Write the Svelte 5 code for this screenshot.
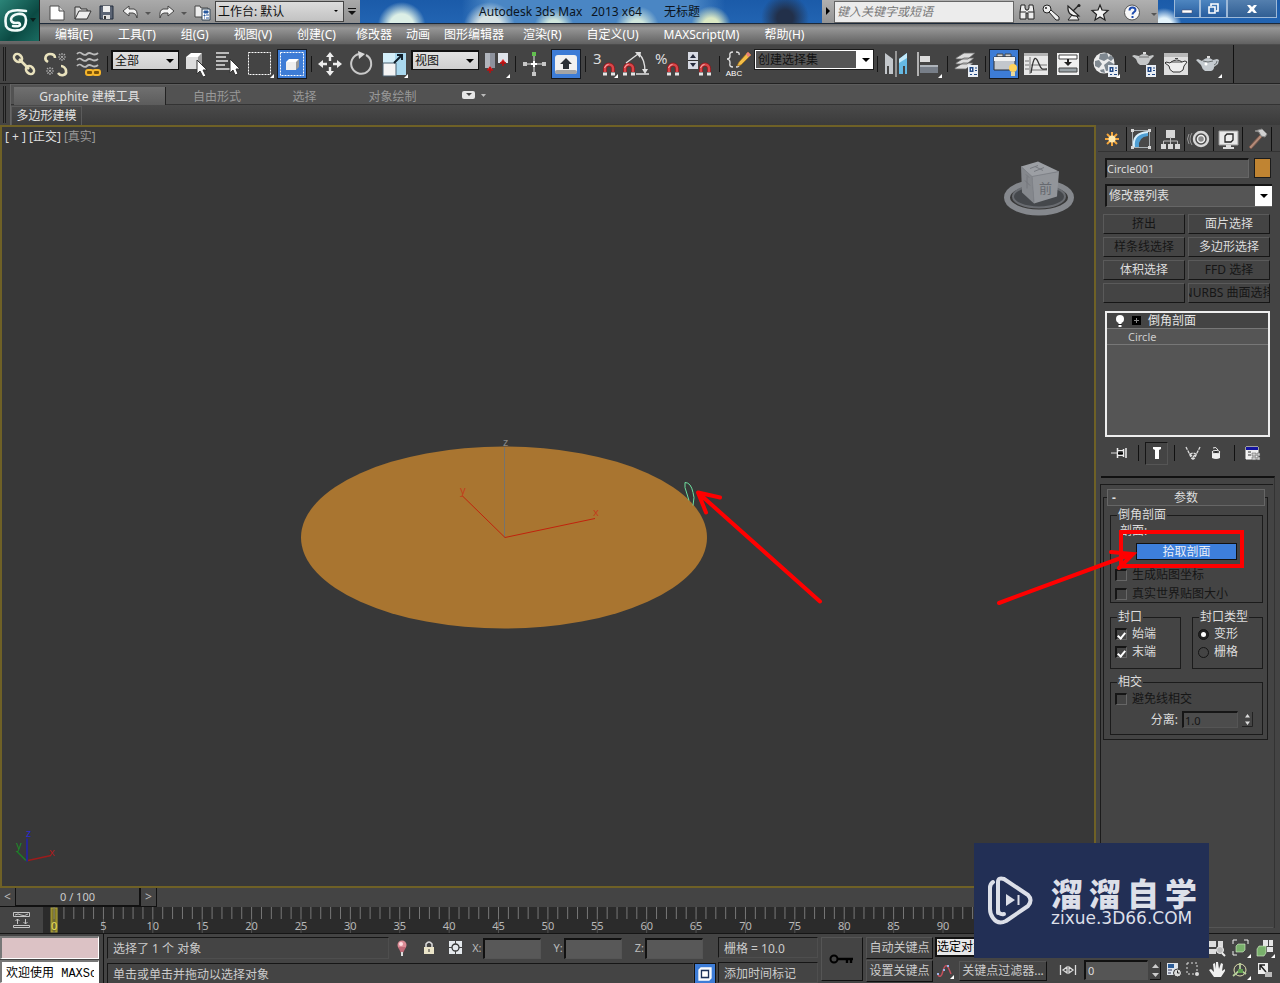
<script>
  const menus = [
    ['编辑(E)', 0], ['工具(T)', 0], ['组(G)', 0], ['视图(V)', 0], ['创建(C)', 0],
    ['修改器', 1], ['动画', 1], ['图形编辑器', 1],
    ['渲染(R)', 0], ['自定义(U)', 0], ['MAXScript(M)', 0], ['帮助(H)', 0]
  ];

  const fly = '<path d="M28 24v4h-4z" fill="#fff"/>';
  const magnet = '<path d="M14 22v-3.500a4 4 0 0 1 8 0V22" fill="none" stroke="#8f1a1e" stroke-width="4"/><path d="M14 22v-3.500a4 4 0 0 1 8 0V22" fill="none" stroke="#d9474a" stroke-width="2.400"/><path d="M13.500 18q1-3.500 4-3.500" fill="none" stroke="#f7b0b0"/><path d="M12 22.500h4v3h-4zM20 22.500h4v3h-4z" fill="#e4e4e4"/>';
  const sheet = '<path d="M16 15h10v12H16z" fill="#e9eef4"/><path d="M17.500 17h4v5h-4z" fill="#234a86"/><path d="M19 18.500h1v2h-1z" fill="#fff"/><path d="M23 18h2M23 20.500h2M18 24.500h2M22 24.500h3" stroke="#234a86"/>';

  const tools = {
    link: '<g fill="none" stroke="#e9e2bd" stroke-width="2.600"><ellipse cx="8" cy="8" rx="4.500" ry="3.500" transform="rotate(45 8 8)"/><ellipse cx="20" cy="20" rx="4.500" ry="3.500" transform="rotate(45 20 20)"/><path d="M9 9l10 10"/></g>',
    unlink: '<g fill="none" stroke="#e9e2bd" stroke-width="2.600"><path d="M6 12c-5-3-2-8 2-8s5 2 5 4M16 23c3 4 9 2 8-2 0-3-3-5-5-5"/></g><g stroke="#aaa" stroke-width="1.200"><path d="M20 3v8M16 7h8M17 4l6 6M23 4l-6 6M8 17v8M4 21h8M5 18l6 6M11 18l-6 6" stroke-dasharray="2 1"/></g>',
    bind: '<g fill="none" stroke="#bcbcbc" stroke-width="1.800"><path d="M3 4c4-5 6 4 10 0s6 4 11-1M3 10c4-5 6 4 10 0s6 4 11-1M3 16c4-5 6 4 10 0s6 4 11-1"/></g><g fill="#7a5208" stroke="#f6b52a" stroke-width="2"><rect x="12" y="20" width="7" height="5" rx="2"/><rect x="19" y="20" width="7" height="5" rx="2"/></g>',
    select: '<path d="M4 7l5-4h11l-3 4z" fill="#fff"/><path d="M4 7h12v12H4z" fill="#dedede"/><path d="M16 7l4-4v12l-4 4z" fill="#9b9b9b"/><path d="M15 10v14l3-3 3 6 3-1-3-6h4z" fill="#fff" stroke="#333"/>',
    list: '<path d="M2 3h13M2 7h10M2 11h12M2 15h9M2 19h14" stroke="#e2e2e2" stroke-width="1.400"/><path d="M16 9v14l3-3 2 5 3-1-2-5h4z" fill="#fff" stroke="#333"/>',
    region: '<path d="M2.500 2.500h22v22h-22z" fill="none" stroke="#fff" stroke-dasharray="2 1"/>' + fly,
    crossing: '<path d="M2.500 2.500h23v23h-23z" fill="none" stroke="#fff" stroke-dasharray="2 1"/><path d="M8 12l3-3h10l-2 3z" fill="#fff"/><path d="M8 12h10v8H8z" fill="#eee"/><path d="M18 12l3-3v8l-3 3z" fill="#999"/>',
    move: '<path d="M14 2l4 5h-8zM14 26l4-5h-8zM2 14l5-4v8zM26 14l-5-4v8z" fill="#eee"/><path d="M14 7v4M14 17v4M7 14h4M17 14h4" stroke="#eee" stroke-width="2.400"/>',
    rotate: '<path d="M18 5a10 10 0 1 1-7-1" fill="none" stroke="#c9c9c9" stroke-width="2"/><path d="M10 1l7 3-6 5z" fill="#d9d9d9"/>',
    scale: '<path d="M3 3h23v22H3z" fill="#a9d8ee"/><path d="M3 3h12v12H3z" fill="#d4effa"/><path d="M3 13h13v13H3z" fill="#f4f4f4" stroke="#4a6070"/><path d="M14 13l7-7M17 5h5v5" fill="none" stroke="#10202c" stroke-width="2"/>' + fly,
    pivot: '<path d="M3 3h10v15H3z" fill="#8d929d"/><path d="M3 3h5v15H3z" fill="#b1b5bd"/><path d="M16 3h10v10H16z" fill="#dfe3ea"/><path d="M5 20h6l-3-4zM18 13h6l-3-4z" fill="#e03030"/><path d="M8 17v6M21 11v5M5 20h6M18 13h6" stroke="#b80f0f" stroke-width="1.500"/>' + fly,
    manipulate: '<path d="M14 5v18M5 14h18" stroke="#e5e5e5"/><path d="M11 14h6M14 11v6" stroke="#fff" stroke-width="2"/><path d="M12 2h4v4h-4z" fill="#62c04f"/><path d="M3 12h4v4H3zM22 12h4v4h-4zM12 22h4v4h-4z" fill="#c8c8c8"/>',
    keymode: '<rect x="3" y="5" width="22" height="19" rx="3" fill="#f1f1f1"/><rect x="3" y="20" width="22" height="4" rx="2" fill="#a4a4a4"/><path d="M14 8l6 6h-3v5h-6v-5H8z" fill="#2c3036"/>',
    snap: '<text x="3" y="14" font-family="Noto Sans" font-size="15" fill="#ddd">3</text><g transform="translate(1 0)">' + magnet + '</g>' + fly,
    angle: '<g transform="translate(-11 0)">' + magnet + '</g><path d="M4 13L16 4M14 24h13M17 4q6 5 6 18" fill="none" stroke="#e0e0e0" stroke-width="1.300"/><path d="M13 2h6l-1 6zM20 19h6l-3 5z" fill="#e0e0e0"/>',
    percent: '<text x="1" y="14" font-family="Noto Sans" font-size="15" fill="#ddd">%</text><g transform="translate(1 0)">' + magnet + '</g>',
    spinner: '<path d="M2 2h10v17H2z" fill="#d8dbe4"/><path d="M2 10.500h10" stroke="#333"/><path d="M4 8l3-4 3 4zM4 13h6l-3 4z" fill="#252a3c"/><g transform="translate(1 0)">' + magnet + '</g>',
    named: '<path d="M9 2q-4 0-3 4 0 3-3 3 3 0 3 4-1 4 3 4M12 2q4 0 3 3M12 17q4 0 3-4" fill="none" stroke="#ddd" stroke-width="1.400"/><path d="M24 2l3 3-10 10-4 1 2-4z" fill="#f2be48" stroke="#9b6a15" stroke-width=".7"/><path d="M24 2l3 3-3 2-2-3z" fill="#e67e7b"/><text x="10" y="26" text-anchor="middle" font-family="Liberation Sans" font-size="8" fill="#fff">ABC</text>',
    mirror: '<path d="M3 3l8 6v15H7v-8H5v8H3z" fill="#c3c7cb"/><path d="M14 1v26" stroke="#e8e8e8"/><path d="M25 3l-8 6v15h4v-8h2v8h2z" fill="#65b9e3"/><path d="M25 3l-8 6v4l8-5z" fill="#c1e9fb"/>',
    align: '<path d="M4 2v24" stroke="#eee" stroke-width="1.300"/><path d="M6 6h10v6H6z" fill="#dcdcdc"/><path d="M6 15h18v8H6z" fill="#777e88"/><path d="M6 15h18v2H6z" fill="#aeb4bb"/>' + fly,
    layers: '<path d="M3 18l8-5h10l-7 6H3zM4 13l8-5h10l-7 6H4zM4 8l8-5h11l-7 6H4z" fill="#ddd" stroke="#656565" stroke-width=".8"/>' + sheet,
    ribbon: '<path d="M7 4h6v3H7zM15 4h6v3h-6z" fill="#d1d1d1" stroke="#444"/><path d="M4 7h21v13H4z" fill="#c3c7cd" stroke="#2b2f36"/><path d="M4 7h21v4H4z" fill="#f1f1f1"/><circle cx="23" cy="18" r="4" fill="#ffd35c"/><path d="M21 22h4v4h-4z" fill="#e8d9a0"/>',
    curve: '<path d="M2 3h24v22H2z" fill="#e8e8e8"/><path d="M2 3h24v3H2z" fill="#b5b5b5"/><path d="M8 7v17M3 11h4M3 15h4M3 19h4M9 15h16M9 20h16" stroke="#777"/><path d="M9 23c3-20 5-16 8-9s4 5 8 5" fill="none" stroke="#333" stroke-width="1.300"/>',
    schematic: '<path d="M3 3h22v22H3z" fill="#f0f0f0"/><path d="M5 5h18v4H5z" fill="#fff" stroke="#444"/><path d="M5 18h18v4H5z" fill="#9aa3a8" stroke="#444"/><path d="M14 9v4" stroke="#222" stroke-width="2"/><path d="M10 12h8l-4 4z" fill="#222"/>',
    material: '<circle cx="12" cy="13" r="10.500" fill="#ededed"/><path d="M8 4l7-1 2 5-5 3-5-2zM3 11l4-1 3 4-3 4-4-2zM12 15l5-4 5 3-2 6-6 1zM18 5l4 3-3 3-3-2zM8 20l4-1 1 4-4-1z" fill="#7f8890"/>' + sheet + fly,
    rset: '<path d="M9 6q5-4 10 0l4-1 1 1-4 4q-1 4-4 5h-6Q7 13 6 9L2 6l2-1z" fill="#c5c7c8"/><path d="M13 2h3v2h-3z" fill="#ddd"/><path d="M9 7h10" stroke="#707070"/>' + sheet,
    rframe: '<path d="M2 3h24v22H2z" fill="#dfdfdf"/><path d="M2 3h24v4H2z" fill="#b9b9b9"/><path d="M9 12q6-4 11 0l3-1 2 1-3 4q0 5-4 6h-7q-4-2-4-6l-4-3 1-1 4 1z" fill="#eee" stroke="#333"/><path d="M13 8.500h3M9 12h11" stroke="#444"/>',
    render: '<path d="M9 10q5-4 10 0l4-1 2 1-1 4-4 3q0 3-3 4h-6Q8 19 7 15l-5-5 2-1 4 2z" fill="#c5cbd0"/><path d="M13 6h3v2h-3z" fill="#ddd"/><path d="M9 11q5 2 10 0M20 15q3-1 3-4" fill="none" stroke="#6b7072"/><circle cx="12" cy="14" r="1.500" fill="#fff"/>' + fly
  };

  const bar = [
    ['link', '选择并链接'], ['unlink', '取消链接选择'], ['bind', '绑定到空间扭曲'], '|',
    { value: '全部', label: '选择过滤器', kind: 'light' },
    ['select', '选择对象'], ['list', '按名称选择'], ['region', '矩形选择区域'], ['crossing', '窗口/交叉', true], '|',
    ['move', '选择并移动'], ['rotate', '选择并旋转'], ['scale', '选择并均匀缩放'],
    { value: '视图', label: '参考坐标系', kind: 'light' },
    ['pivot', '使用轴点中心'], '|', ['manipulate', '选择并操纵'], ['keymode', '键盘快捷键覆盖切换', true], '|',
    ['snap', '捕捉开关'], ['angle', '角度捕捉切换'], ['percent', '百分比捕捉切换'], ['spinner', '微调器捕捉切换'], '|',
    ['named', '编辑命名选择集'],
    { value: '创建选择集', label: '命名选择集', kind: 'dark' }, '|',
    ['mirror', '镜像'], ['align', '对齐'], '|', ['layers', '层管理器'], '|',
    ['ribbon', '石墨建模工具', true], ['curve', '曲线编辑器'], ['schematic', '图解视图'], '|',
    ['material', '材质编辑器'], '|', ['rset', '渲染设置'], ['rframe', '渲染帧窗口'], ['render', '渲染产品']
  ];

  const quick = [
    ['新建', 26, '<path d="M3 4h9l5 5v9H3z" fill="#fff" stroke="#4a4a4a"/><path d="M12 4v5h5" fill="#ddd" stroke="#4a4a4a"/>'],
    ['打开', 24, '<path d="M3 17V5h5l1 2h6v3" fill="#ddd" stroke="#333"/><path d="M3 17l4-8h12l-4 8z" fill="#eee" stroke="#333"/>'],
    ['保存', 24, '<path d="M4 4h13v13H4z" fill="#5b6474" stroke="#222c3c"/><path d="M7 4h7v6H7z" fill="#eee"/><path d="M7 13h7v4H7z" fill="#ddd"/><path d="M8 14h2v3H8z" fill="#333"/>'],
    ['撤消', 24, '<path d="M3 9l6-5v3h5q4 1 3 9-1-5-4-5H9v3z" fill="#f3f3f3" stroke="#454545"/>'],
    ['撤消列表', 12, '<path d="M7 10h6l-3 3z" fill="#555"/>'],
    ['重做', 24, '<path d="M18 9l-6-5v3H7Q3 8 4 16q1-5 4-5h4v3z" fill="#f3f3f3" stroke="#454545"/>'],
    ['重做列表', 12, '<path d="M7 10h6l-3 3z" fill="#555"/>'],
    ['项目文件夹', 24, '<path d="M3 4h5l1 2h7v9H3z" fill="#eee" stroke="#444"/><path d="M10 7h8v11h-8z" fill="#fff" stroke="#345"/><path d="M12 9h4v2h-4zM12 13h1v1h-1zM14 13h3M12 16h1M14 16h3" fill="#27599e" stroke="#27599e"/>']
  ];

  const info = [
    ['搜索', 24, '<path d="M5 3h4v3l1 2h2l1-2V3h4l1 7v7h-6v-6h-2v6H4v-7z" fill="#eee" stroke="#222"/><path d="M4 10h6M12 10h6" stroke="#222"/>'],
    ['速博应用中心', 24, '<circle cx="7" cy="7" r="4" fill="#eee" stroke="#222"/><circle cx="6" cy="6" r="1" fill="#222"/><path d="M9 10l7 8h3v-3l-8-7z" fill="#eee" stroke="#222"/>'],
    ['通讯中心', 24, '<path d="M8 13l-4 5h11l-3-5z" fill="#eee" stroke="#222"/><path d="M4 4q-1 11 11 10z" fill="#eee" stroke="#222" stroke-width="1.200"/><path d="M9 9l6-6" stroke="#222" stroke-width="1.300"/><circle cx="15" cy="3.500" r="1.500" fill="#222"/>'],
    ['收藏夹', 28, '<path d="M10 3l2 5 6 .5-4.500 4 1.500 5.500-5-3-5 3L6.500 12.500 2 8.500 8 8z" fill="#f4f4f4" stroke="#222" stroke-width="1.200"/>'],
    ['帮助', 36, '<circle cx="10" cy="10.500" r="7.500" fill="#f8f8f8" stroke="#555"/><path d="M7.500 8.500q0-3 3-3t3 2.500c0 2-3 2-3 4.500" fill="none" stroke="#204cae" stroke-width="2"/><path d="M9.500 14h2v2h-2z" fill="#204cae"/>'],
    ['帮助菜单', 8, '<path d="M7 11h6l-3 3z" fill="#555"/>']
  ];

  const panels = [
    ['创建', '<g stroke="#f5a63a" stroke-width="2"><path d="M12 5v14M5 12h14M7 7l10 10M17 7L7 17"/></g><circle cx="12" cy="12" r="3.500" fill="#ffeab0"/>'],
    ['修改', '<path d="M5 20q-2-14 14-15v4q-10 1-9 11z" fill="#4f9fd4"/><path d="M5 20q-2-14 14-15" fill="none" stroke="#d9f0fc" stroke-width="2"/><path d="M3.500 3.500h17v17h-17z" fill="none" stroke="#a9b0b4"/><path d="M2 2h3v3H2zM19 2h3v3h-3zM2 19h3v3H2zM19 19h3v3h-3z" fill="#d9d9d9"/>'],
    ['层次', '<path d="M8 3h9v8H8zM3 17h5v5H3zM10 17h5v5h-5zM17 17h5v5h-5z" fill="#d8d8d8"/><path d="M12.500 10v7M5.500 17v-3h14v3" fill="none" stroke="#bbb"/>'],
    ['运动', '<circle cx="14" cy="12" r="7" fill="#4b4b4b" stroke="#d8d8d8" stroke-width="2.400"/><circle cx="14" cy="12" r="3.500" fill="#888" stroke="#eee" stroke-width="1.500"/><path d="M5 6q-4 6 0 12M2 7q-3 5 0 10" fill="none" stroke="#999"/>'],
    ['显示', '<path d="M3 4h19v14H3z" fill="#e9e9e9" stroke="#999"/><path d="M9 9l2-2h6v6l-2 2H9z" fill="#eee" stroke="#222" stroke-width="1.300"/><path d="M10 18h5v2h3v2H7v-2h3z" fill="#ddd"/>'],
    ['工具', '<path d="M4 20L15 8l2 2L6 22z" fill="#b38a78" stroke="#75564a"/><path d="M10 4l7-2 5 5-2 3-4-1-2-4z" fill="#d0d0d0" stroke="#888"/>']
  ];

  const modButtons = [
    ['挤出', true], ['面片选择', false], ['样条线选择', true], ['多边形选择', false],
    ['体积选择', false], ['FFD 选择', true], ['', true], ['NURBS 曲面选择', true]
  ];

  const frames = Array.from({ length: 101 }, (_, i) => i);
  const at = (f) => `${(1.05 + f * 0.938).toFixed(3)}%`;

  const nav = [
    ['缩放所有视图', '<path d="M2 3h7v6H2zM11 3h5v6h-5zM2 11h7v5H2z" fill="#ddd"/><circle cx="13" cy="12" r="3.500" fill="#bbb" stroke="#eee"/><path d="M15 15l3 3" stroke="#eee" stroke-width="2"/>'],
    ['最大化显示选定对象', '<path d="M2 6V2h4M13 2h4v4M2 13v4h4" fill="none" stroke="#eee"/><path d="M5 8l2-2h7v6l-2 2H5z" fill="#79b06c" stroke="#d8f0cf" stroke-width=".6"/><path d="M20 16v4h-4z" fill="#fff"/>'],
    ['所有视图最大化显示', '<path d="M8 2h5v6H8zM14 2h4v6h-4zM12 9h6v5h-6z" fill="#e5e5e5"/><path d="M2 11l2-3h7v7l-2 3H2z" fill="#79b06c" stroke="#d8f0cf" stroke-width=".6"/><path d="M20 16v4h-4z" fill="#fff"/>'],
    ['平移视图', '<path d="M7 17L2 10l2-1 3 3-1-8 2-1 1 6V2h2l1 7 2-6 2 1-1 7 3-2v2l-4 6z" fill="#f0f0f0"/>'],
    ['环绕子对象', '<circle cx="9" cy="10" r="6" fill="none" stroke="#e0e0b0"/><path d="M9 3v7l6 4M9 10l-7 6" fill="none" stroke="#b6cf9b" stroke-width="1.800"/><path d="M7 9h5v4H7z" fill="#5f9d4f"/><path d="M20 16v4h-4z" fill="#fff"/>'],
    ['最大化视口切换', '<path d="M3 3h10v11H3z" fill="#eee"/><path d="M11 12L5 5M5 10V5h5" fill="none" stroke="#222" stroke-width="1.500"/><path d="M10 12h7v5h-7z" fill="#bbb"/>']
  ];
</script>

{#snippet icon(size, body)}
  <svg width={size} height={size} viewBox="0 0 {size} {size}" aria-hidden="true">{@html body}</svg>
{/snippet}

<div class="app">
  <header class="title">
    <button class="logo" aria-label="应用程序">
      <svg width="40" height="41" viewBox="0 0 40 41" aria-hidden="true">
        <path d="M26 11q-12-2-17 1-5 4-3 14 3 6 14 4 6-2 6-10 0-7-8-6-6 1-7 5 0 4 5 4 4-1 4 2-1 2-7 1" fill="none" stroke="#f2fbf9" stroke-width="2.600" stroke-linecap="round" />
        <path d="M30 18h6l-3 4z" fill="#0a1f1c" />
      </svg>
    </button>
    <div class="quick">
      {#each quick as [label, w, body]}
        <button class="plain" style="width:{w}px" aria-label={label}>{@render icon(20, body)}</button>
      {/each}
      <span class="pick work">
        <select aria-label="工作台"><option>工作台: 默认</option></select>
      </span>
      <button class="plain more" aria-label="自定义快速访问工具栏">
        <svg width="10" height="8" viewBox="0 0 10 8" aria-hidden="true"><path d="M1 0h8v1H1zM1 3h8L5 7z" fill="#111" /></svg>
      </button>
    </div>
    <h1><span>Autodesk 3ds Max</span><span>2013 x64</span><span class="doc">无标题</span></h1>
    <div class="info">
      <button class="plain tri" aria-label="展开搜索">
        <svg width="6" height="9" viewBox="0 0 6 9" aria-hidden="true"><path d="M1 0l4 4-4 4z" fill="#000" /></svg>
      </button>
      <input class="search" type="text" placeholder="键入关键字或短语" aria-label="搜索帮助" />
      {#each info as [label, w, body]}
        <button class="plain" style="width:{w}px" aria-label={label}>{@render icon(20, body)}</button>
      {/each}
    </div>
    <div class="win">
      <button aria-label="最小化"><svg width="12" height="12" viewBox="0 0 12 12"><path d="M1 7h10v3H1z" fill="#fff" stroke="#446" stroke-width=".5" /></svg></button>
      <button aria-label="还原"><svg width="12" height="12" viewBox="0 0 12 12"><path d="M4 3V1h7v7H9M2 4h6v6H2z" fill="none" stroke="#fff" stroke-width="1.600" /></svg></button>
      <button class="close" aria-label="关闭"><svg width="12" height="12" viewBox="0 0 12 12"><path d="M1 2h3l2 2 2-2h3L8 6l3 4H8L6 8l-2 2H1l3-4z" fill="#fff" /></svg></button>
    </div>
  </header>

  <nav class="menu" aria-label="主菜单">
    {#each menus as [label, tight]}
      <button class:tight={tight === 1}>{label}</button>
    {/each}
  </nav>

  <div class="toolbar" role="toolbar" aria-label="主工具栏">
    <div class="strip">
      <i class="grip"></i>
      {#each bar as item}
        {#if item === '|'}
          <i class="sep"></i>
        {:else if Array.isArray(item)}
          <button class="tool" class:on={item[2]} aria-label={item[1]}><span>{@render icon(28, tools[item[0]])}</span></button>
        {:else}
          <span class="pick {item.kind}"><select aria-label={item.label}><option>{item.value}</option></select></span>
        {/if}
      {/each}
    </div>
  </div>

  <div class="ribbon">
    <i class="grip"></i>
    <div class="ribbon-main">
      <div class="tabs">
        <button class="tab active">Graphite 建模工具</button>
        <button class="tab t2">自由形式</button>
        <button class="tab t3">选择</button>
        <button class="tab t4">对象绘制</button>
        <button class="tab mini" aria-label="最小化功能区">
          <svg width="26" height="10" viewBox="0 0 26 10" aria-hidden="true"><rect y="1" width="13" height="8" rx="2" fill="#e6e6e6" /><path d="M4 3h6L7 6z" fill="#444" /><path d="M19 4h5l-2.500 3z" fill="#bbb" /></svg>
        </button>
      </div>
      <div class="sub"><button>多边形建模</button></div>
    </div>
  </div>

  <div class="body">
    <main>
      <section class="viewport" aria-label="正交视口">
        <div class="vlabel"><button>[ + ]</button><button>[正交]</button><button class="dim">[真实]</button></div>
        <svg class="scene" viewBox="2 127 1092 760" preserveAspectRatio="xMidYMid slice" aria-hidden="true">
          <ellipse cx="504" cy="538" rx="203" ry="91" fill="#a97530" />
          <path d="M504.500 448v90" stroke="#77736c" />
          <path d="M595 519l-90 19-43-42" fill="none" stroke="#c1230c" />
          <g font-family="Noto Sans" font-size="11" fill="#c1401c"><text x="593" y="516">x</text><text x="460" y="494">y</text><text x="503" y="446" fill="#888">z</text></g>
          <path d="M689 501l-4-13v-5q6 0 8 10l1 5-1 8" fill="none" stroke="#6ee0a0" />
          <g fill="none" stroke="#f00" stroke-width="4" stroke-linecap="round" stroke-linejoin="round"><path d="M820 602L699 494M720 498l-22-5 8 20" /></g>
          <g>
            <ellipse cx="1039" cy="198" rx="32" ry="15" fill="none" stroke="#85888d" stroke-width="6" />
            <ellipse cx="1039" cy="197" rx="26" ry="11" fill="#45484c" stroke="#686b70" stroke-width="2" />
            <path d="M1021 167l17-5 21 10-27 6z" fill="#9c9fa4" /><path d="M1021 167l11 10 2 27-12-11z" fill="#85888d" /><path d="M1032 177l27-5-2 25-23 7z" fill="#92959a" />
            <path d="M1021 167l11 10 27-5M1032 177l2 26" fill="none" stroke="#7f8288" />
            <path d="M1030 169l8-3M1034 172l10-4M1035 167l8 4" stroke="#777a80" />
            <path d="M1026 175l3 3M1025 181l5 5M1027 177v12" stroke="#74777c" />
            <text x="1039" y="193" font-family="Noto Sans CJK SC" font-size="13" fill="#66696f">前</text>
          </g>
          <path d="M27 839v23" stroke="#2020b0" stroke-width="1.500" /><path d="M28 861l23-5" stroke="#9c1c1c" stroke-width="1.500" /><path d="M26 861l-9-9" stroke="#1c7c28" stroke-width="1.500" />
          <g font-family="Noto Sans" font-size="11"><text x="26" y="837" fill="#2a2ad0">z</text><text x="16" y="849" fill="#1c8c28">y</text><text x="49" y="856" fill="#a81c1c">x</text></g>
        </svg>
      </section>
      <div class="slider">
        <button class="step" aria-label="上一帧">&lt;</button>
        <button class="thumb">0 / 100</button>
        <button class="step" aria-label="下一帧">&gt;</button>
      </div>
      <div class="track">
        <button class="plain mini-curve" aria-label="打开迷你曲线编辑器">
          <svg width="20" height="18" viewBox="0 0 20 18" aria-hidden="true"><path d="M1.500 1.500h16v4h-16zM1.500 14.500h16v2h-16zM5.500 13V8M3.500 10l2-2 2 2M13.500 8v5M11.500 11l2 2 2-2M3 4q3-2 6 0t7-1" fill="none" stroke="#c5c5c5" /></svg>
        </button>
        <div class="ruler">
          <svg width="100%" height="26" aria-label="时间轴">
            <rect x={at(0)} y="1" width="6" height="24" fill="#857c22" stroke="#b0a640" transform="translate(-3 0)" />
            {#each frames as f}
              <line x1={at(f)} x2={at(f)} y1="0" y2="12" stroke="#777" />
              {#if f % 5 === 0}
                <line x1={at(f)} x2={at(f)} y1="12" y2="26" stroke="#555" />
                <text class:now={f === 0} x={at(f)} y="23" text-anchor="middle">{f}</text>
              {/if}
            {/each}
          </svg>
        </div>
      </div>
    </main>

    <aside>
      <div class="ptabs">
        {#each panels as [label, body], i}
          <button class:cur={i === 1} aria-label={label}>{@render icon(24, body)}</button>
        {/each}
      </div>
      <div class="name">
        <input type="text" value="Circle001" aria-label="对象名称" />
        <button class="swatch" aria-label="对象颜色"></button>
      </div>
      <span class="pick mods"><select aria-label="修改器列表"><option>修改器列表</option></select></span>
      <div class="sets">
        {#each modButtons as [label, off]}
          <button class:off disabled={label === ''}>{label}</button>
        {/each}
      </div>
      <ul class="stack">
        <li class="sel">
          <svg width="10" height="14" viewBox="0 0 10 14" aria-hidden="true"><circle cx="5" cy="5" r="4" fill="#fff" /><path d="M3.500 8h3v5h-3z" fill="#fff" /><path d="M3 10.500h4" stroke="#222" /></svg>
          <svg width="9" height="9" viewBox="0 0 9 9" aria-hidden="true"><path d="M0 0h9v9H0z" fill="#000" /><path d="M2 4.500h5M4.500 2v5" stroke="#888" /></svg>
          <span>倒角剖面</span>
        </li>
        <li>Circle</li>
      </ul>
      <div class="stacktools">
        <button class="s1" aria-label="锁定堆栈"><svg width="16" height="12" viewBox="0 0 16 12"><path d="M0 6h6" stroke="#ddd" /><path d="M6.500 1v10M12.500 2v8M15 1v10" stroke="#eee" stroke-width="1.500" /><path d="M7 3.500h5M7 8.500h5" stroke="#eee" /><path d="M7 5.500h5v1.500H7z" fill="#000" /></svg></button>
        <i></i>
        <button class="down" aria-label="显示最终结果"><svg width="10" height="16" viewBox="0 0 10 16"><path d="M1 2h8v2L7 5v9H3V5L1 4z" fill="#fff" /></svg></button>
        <i></i>
        <button class="s2" aria-label="使唯一"><svg width="16" height="14" viewBox="0 0 16 14"><path d="M1 1l6 12M15 1L9 13M5 8l3 3 3-3-3-1zM8 11v3" fill="none" stroke="#ddd" stroke-width="1.300" stroke-dasharray="3 1" /></svg></button>
        <button class="s3" aria-label="移除修改器"><svg width="12" height="14" viewBox="0 0 12 14"><path d="M2 6h8v6q-4 2-8 0z" fill="#eee" /><ellipse cx="6" cy="6" rx="4" ry="1.500" fill="#222" stroke="#eee" /><path d="M3 2q3-2 5 2" fill="none" stroke="#eee" /></svg></button>
        <i></i>
        <button class="s2" aria-label="配置修改器集"><svg width="16" height="15" viewBox="0 0 16 15"><path d="M1 1h12v12H1z" fill="#eee" stroke="#fff" /><path d="M1 1h12v3H1z" fill="#1414a0" /><path d="M3 6h3M3 9h3" stroke="#333" /><path d="M7 7h4v3H7zM12 7h3v3h-3zM7 11h4v3H7zM12 11h3v3h-3z" fill="#ccc" stroke="#555" stroke-width=".5" /></svg></button>
      </div>
      <div class="rollups">
        <section class="rollup">
          <button class="head"><b>-</b><span>参数</span></button>
          <fieldset class="g1">
            <legend>倒角剖面</legend>
            <p>剖面:</p>
            <div class="pickwrap">
              <button class="profile">拾取剖面</button>
              <svg class="mark" width="250" height="90" viewBox="0 0 250 90" aria-hidden="true">
                <g fill="none" stroke="#f00" stroke-width="4"><rect x="126" y="6" width="121" height="34" /><path d="M4 77l130-48M116 26l22 2-14 14" stroke-linecap="round" /></g>
              </svg>
            </div>
            <label class="off"><input type="checkbox" />生成贴图坐标</label>
            <label class="off"><input type="checkbox" />真实世界贴图大小</label>
          </fieldset>
          <div class="pair">
            <fieldset>
              <legend>封口</legend>
              <label><input type="checkbox" checked />始端</label>
              <label><input type="checkbox" checked />末端</label>
            </fieldset>
            <fieldset>
              <legend>封口类型</legend>
              <label><input type="radio" name="cap" checked />变形</label>
              <label><input type="radio" name="cap" />栅格</label>
            </fieldset>
          </div>
          <fieldset class="g3">
            <legend>相交</legend>
            <label class="off"><input type="checkbox" />避免线相交</label>
            <div class="num"><label for="sep">分离:</label><input id="sep" type="text" value="1.0" />
              <svg width="11" height="15" viewBox="0 0 11 15" aria-hidden="true"><path d="M3 5.500L5.500 2 8 5.500zM3 9.500h5L5.500 13z" fill="#ddd" /><path d="M10.500 0v14.500H0" fill="none" stroke="#222" /></svg>
            </div>
          </fieldset>
        </section>
      </div>
    </aside>
  </div>

  <footer>
    <div class="script">
      <input class="pink" type="text" aria-label="宏录制器" />
      <input class="listen" type="text" value="欢迎使用 MAXScript" aria-label="MAXScript 侦听器" />
    </div>
    <div class="status">
      <div class="row">
        <output class="cell grow">选择了 1 个 对象</output>
        <div class="locks">
          <button class="plain" aria-label="通讯中心"><svg width="18" height="18" viewBox="0 0 18 18"><circle cx="9" cy="6" r="4.500" fill="#dc8c96" /><path d="M5 8h8l-3 6H8z" fill="#c06a78" /><circle cx="8" cy="5" r="2" fill="#ffdce0" /><path d="M8 13h2v4H8z" fill="#ddd" /></svg></button>
          <button class="plain" aria-label="选择锁定切换"><svg width="18" height="18" viewBox="0 0 18 18"><path d="M6 9V5q3-4 6 0v3" fill="none" stroke="#ddd" stroke-width="1.500" /><path d="M4 8h10v7H4z" fill="#ebe5c9" /><path d="M8.500 10h1v3h-1z" fill="#333" /></svg></button>
          <button class="plain" aria-label="绝对模式变换输入"><svg width="18" height="18" viewBox="0 0 18 18"><path d="M2 2h13v13H2z" fill="#e5e9ed" /><circle cx="8.500" cy="8.500" r="3.500" fill="none" stroke="#333" stroke-width="1.300" /><path d="M8.500 2v3M8.500 12v3M2 8.500h3M12 8.500h3" stroke="#444" /></svg></button>
        </div>
        {#each ['X', 'Y', 'Z'] as axis}
          <label class="axis">{axis}:<input type="text" aria-label="{axis} 坐标" /></label>
        {/each}
      </div>
      <div class="row low">
        <output class="cell grow">单击或单击并拖动以选择对象</output>
        <button class="iso" aria-label="孤立当前选择切换"><svg width="16" height="16" viewBox="0 0 16 16"><path d="M2 4l2-2h10v10l-2 2H2z" fill="#e8eef6" stroke="#fff" stroke-width="1.300" /><path d="M4.500 4.500h7v7h-7z" fill="#fff" stroke="#1c3158" stroke-width="1.300" /></svg></button>
      </div>
    </div>
    <div class="grid-info">
      <output class="cell">栅格 = 10.0</output>
      <output class="cell">添加时间标记</output>
    </div>
    <button class="bigkey" aria-label="设置关键点"><svg width="26" height="12" viewBox="0 0 26 12"><circle cx="5" cy="6" r="3.500" fill="none" stroke="#000" stroke-width="2" /><path d="M9 6h15M18 6v4M22 6v4" stroke="#000" stroke-width="2.400" /></svg></button>
    <div class="keys"><button>自动关键点</button><button>设置关键点</button></div>
    <div class="filters">
      <select aria-label="关键点选择集"><option>选定对象</option></select>
      <div class="row">
        <button class="plain" aria-label="新建关键点的默认入/出切线"><svg width="20" height="18" viewBox="0 0 20 18"><path d="M3 13q3 4 5-4t5-4q1 2 3 7" fill="none" stroke="#c4505c" stroke-width="1.500" /><path d="M2 11h2v2H2zM8 7h2v2H8zM12 3h2v2h-2z" fill="#9db4e8" /><path d="M19 13v4h-4z" fill="#fff" /></svg></button>
        <button class="flt">关键点过滤器...</button>
      </div>
    </div>
    <div class="play">
      <button class="plain" aria-label="关键点模式切换"><svg width="18" height="12" viewBox="0 0 18 12"><path d="M1.500 1v10M16.500 1v10M8 3L4 6l4 3zM10 3l4 3-4 3z" fill="none" stroke="#ddd" stroke-width="1.300" /></svg></button>
      <input type="text" value="0" aria-label="当前帧" />
      <svg width="11" height="18" viewBox="0 0 11 18" aria-hidden="true"><path d="M2 6l3.500-4L9 6zM2 11h7l-3.500 4z" fill="#ccc" /><path d="M10.500 0v17.500H0" fill="none" stroke="#111" /></svg>
      <button class="plain cfg" aria-label="时间配置"><svg width="18" height="18" viewBox="0 0 18 18"><path d="M2 2h11v12H2z" fill="#dfe5ec" /><path d="M3 3h6v4H3z" fill="#2c5d99" /><path d="M3 9h4M3 12h3" stroke="#335" /><circle cx="12.500" cy="12" r="4" fill="#ddd" stroke="#333" /><path d="M12.500 9.500V12h2" fill="none" stroke="#222" /></svg></button>
      <button class="plain" aria-label="缩放区域"><svg width="16" height="18" viewBox="0 0 16 18"><path d="M2 2h10v11H2z" fill="none" stroke="#ddd" stroke-dasharray="2 2" /><circle cx="12" cy="13" r="2" fill="#ddd" /></svg></button>
    </div>
    <div class="nav">
      {#each nav as [label, body]}
        <button class="plain" aria-label={label}>{@render icon(20, body)}</button>
      {/each}
    </div>
    <div class="watermark">
      <svg width="48" height="50" viewBox="0 0 48 50" aria-hidden="true">
        <path d="M11 37V6q0-5 6-3l24 16q5 5 0 11L19 45q-8 4-13-3-3-4-3-9V12q0-4 3-6" fill="none" stroke="#dcdfe8" stroke-width="4" stroke-linecap="round" stroke-linejoin="round" />
        <path d="M11 33q0 6 6 5" fill="none" stroke="#dcdfe8" stroke-width="4" stroke-linecap="round" />
        <path d="M19 18l9 6-9 6z" fill="#dcdfe8" /><path d="M31.500 19v10" stroke="#dcdfe8" stroke-width="2" />
      </svg>
      <div><strong>{#each '溜溜自学' as ch}<b>{ch}</b>{/each}</strong><span>zixue.3D66.COM</span></div>
    </div>
  </footer>
</div>

<style>
  :global(body) { background: #444; }
  .app {
    min-height: 100vh; display: flex; flex-direction: column; background: #444; color: #ddd;
    font: 12px/16px "Noto Sans", "Noto Sans CJK SC", sans-serif; overflow: hidden;
  }
  .app :global(svg) { display: block; flex: none; }
  button, input, select, legend { font: inherit; color: inherit; }
  button { background: none; border: 0; padding: 0; white-space: nowrap; display: flex; align-items: center; justify-content: center; }
  input { min-width: 0; box-sizing: border-box; margin: 0; }
  select { appearance: none; border: 0; background: none; width: 100%; height: 100%; padding: 0 0 0 2px; }
  i { flex: none; }

  .pick { position: relative; display: block; box-sizing: border-box; flex: none; }
  .pick::after {
    content: ""; position: absolute; right: 4px; top: 50%; margin-top: -2px; pointer-events: none;
    border: 4px solid transparent; border-top-color: #000; border-bottom: 0;
  }

  .title { display: flex; height: 24px; box-sizing: border-box; border-bottom: 1px solid #1d2a3a; background: linear-gradient(#1b5ba9, #2264b2); }
  .logo { position: relative; z-index: 2; width: 40px; height: 41px; flex: none; background: linear-gradient(135deg, #2b8478, #0b4a43 60%, #1a6b61); border-right: 1px solid #222; box-sizing: border-box; overflow: hidden; }
  .quick { display: flex; align-items: center; width: 320px; padding-left: 4px; box-sizing: border-box; background: linear-gradient(#aaa, #8f8f8f); }
  .quick .plain { flex: none; overflow: hidden; }
  .work { width: 129px; height: 21px; margin-left: 1px; background: linear-gradient(#dcdcdc, #c2c2c2); border: 1px solid #444; color: #111; }
  .work::after { border-width: 2px; border-bottom: 0; right: 5px; }
  .quick .more { width: 16px; }
  h1 {
    flex: 1; margin: 0; display: flex; justify-content: center; align-items: center; gap: 9px; font: inherit; color: #0b1420; padding-right: 3px;
    background:
      radial-gradient(circle at 9% 26px, #dcefe6 0 12px, transparent 24px),
      radial-gradient(circle at 28% 28px, #d5e2e4 0 12px, transparent 26px),
      radial-gradient(circle at 42% 28px, #cfe6dc 0 8px, transparent 20px),
      radial-gradient(circle at 60% 28px, #cfe6dc 0 8px, transparent 22px),
      radial-gradient(circle at 76% 26px, #dbe9c4 0 8px, transparent 20px),
      radial-gradient(circle at 92% 18px, #22304a 0 8px, transparent 24px),
      linear-gradient(90deg, transparent 22%, #4a86c4 28% 72%, transparent 79%);
  }
  .doc { margin-left: 13px; }
  .info { display: flex; align-items: center; width: 336px; background: linear-gradient(#b0b0b0, #949494); }
  .info .plain { flex: none; overflow: hidden; }
  .info .tri { width: 12px; }
  .search { flex: 1; height: 22px; border: 1px solid #666; background: #ececec; color: #333; padding: 0 2px; font-style: italic; }
  .search::placeholder { color: #777; opacity: 1; }
  .win { display: flex; width: 122px; box-sizing: border-box; padding: 0 3px 0 16px; background: radial-gradient(circle at 6px 26px, #e3f3fb 0 8px, transparent 18px); }
  .win button { flex: 1; height: 18px; border: 1px solid #9db9d8; border-top: 0; background: linear-gradient(#4e86c0, #275d9f); }
  .win .close { flex: 2; background: linear-gradient(#547fae, #315f94); }

  .menu { display: flex; height: 21px; padding-left: 42px; background: linear-gradient(#6b6b6b, #969696 20%, #616161); border-bottom: 1px solid #4c4c4c; box-sizing: border-box; }
  .menu button { padding: 1px 13px 0 12px; color: #fff; }
  .menu button:first-child { padding-left: 13px; }
  .menu .tight { padding: 1px 7px 0; }

  .toolbar { display: flex; height: 38px; background: #444; border-bottom: 1px solid #222; }
  .strip { display: flex; align-items: center; padding-right: 9px; border-right: 1px solid #111; }
  .grip { width: 8px; align-self: stretch; box-sizing: border-box; background: linear-gradient(90deg, transparent 3px, #1b1b1b 3px 4px, transparent 4px 5px, #1b1b1b 5px 6px, transparent 6px); margin: 2px 0; }
  .sep { width: 6px; height: 16px; background: linear-gradient(90deg, transparent 3px, #161616 3px 4px, transparent 4px); }
  .tool { width: 32px; height: 32px; flex: none; }
  .tool span { border: 1px solid transparent; }
  .tool.on span { background: #3d7cd6; border-color: #17191d; }
  .light { width: 68px; height: 20px; margin: 0 1px; align-self: flex-start; top: 5px; background: linear-gradient(#e2e2e2, #cfcfcf); border: 1px solid #111; border-width: 2px 1px 1px 2px; color: #111; }
  .dark { width: 118px; height: 19px; margin: 0 1px; align-self: flex-start; top: 5px; background: linear-gradient(90deg, #555 0 100px, #fff 100px); border: 1px solid #fff; color: #111; outline: 1px solid #1a1a1a; outline-offset: 0; }
  .dark::after { right: 2px; }

  .ribbon { display: flex; height: 41px; background: #444; }
  .ribbon-main { flex: 1; border-left: 1px solid #666; margin-left: 2px; }
  .tabs { display: flex; height: 21px; background: #525252; border-bottom: 1px solid #333; border-top: 1px solid #5d5d5d; box-sizing: border-box; }
  .tab { color: #999; padding-top: 4px; box-sizing: border-box; }
  .tab.active { width: 152px; margin: 2px 0 -1px 3px; padding-top: 1px; color: #e0e0e0; background: linear-gradient(#707070, #5c5c5c); border-right: 1px solid #222; }
  .t2 { width: 102px; } .t3 { width: 73px; } .t4 { width: 103px; } .mini { width: 62px; padding: 0; }
  .sub { display: flex; height: 20px; background: linear-gradient(#4a4a4a, #3b3b3b); }
  .sub button { width: 71px; margin-top: 1px; border: 1px solid #5b5b5b; border-bottom: 0; color: #e3e3e3; box-sizing: border-box; }

  .body { flex: 1; display: flex; min-height: 0; }
  main { flex: 1; min-width: 0; display: flex; flex-direction: column; }
  .viewport { position: relative; flex: 1; min-height: 200px; border: 2px solid #6f6126; background: #383838; overflow: hidden; }
  .scene { position: absolute; inset: 0; width: 100%; height: 100%; }
  .vlabel { position: relative; z-index: 1; display: flex; gap: 3px; padding: 2px 3px; color: #ddd; }
  .vlabel .dim { color: #999; }
  .slider { display: flex; height: 19px; background: #444; }
  .step { width: 16px; border-right: 1px solid #111; border-bottom: 1px solid #111; box-sizing: border-box; color: #bbb; }
  .thumb { width: 125px; border-right: 2px solid #111; border-bottom: 2px solid #111; box-sizing: border-box; font-size: 11px; color: #ccc; }
  .track { display: flex; height: 26px; }
  .mini-curve { width: 43px; }
  .ruler { flex: 1; min-width: 0; background: #2b2b2b; }
  .ruler text { fill: #b8b8b8; font-size: 11px; }
  .ruler .now { fill: #e2dc5c; }

  aside { width: 184px; flex: none; box-sizing: border-box; display: flex; flex-direction: column; padding-left: 7px; background: #444; }
  .ptabs { display: flex; height: 27px; margin-left: -5px; border-bottom: 1px solid #333; padding-top: 2px; box-sizing: border-box; }
  .ptabs button { width: 29px; border-right: 1px solid #111; box-sizing: border-box; overflow: hidden; }
  .ptabs .cur { background: #494949; }
  .name { display: flex; gap: 5px; padding: 6px 9px 0 2px; }
  .name input { flex: 1; height: 20px; border: 1px solid #666; border-top: 2px solid #161616; border-left: 2px solid #161616; background: #585858; color: #ddd; padding: 0; font-size: 11px; }
  .swatch { width: 17px; height: 20px; border: 1px solid #1c1c1c; background: #c08432; }
  .mods { height: 23px; margin: 6px 8px 0 2px; border: 2px solid #161616; border-right: 0; border-bottom: 1px solid #666; background: #555; color: #e0e0e0; }
  .mods::before { content: ""; position: absolute; right: 0; top: 0; bottom: 0; width: 17px; background: #fff; pointer-events: none; }
  .sets { display: grid; grid-template-columns: 1fr 1fr; gap: 3px; padding: 7px 10px 0 0; }
  .sets button { height: 20px; border: 1px solid #5a5a5a; border-right-color: #161616; border-bottom-color: #161616; overflow: hidden; min-width: 0; color: #ddd; }
  .sets .off { color: #161616; }
  .stack { list-style: none; height: 122px; margin: 8px 10px 0 2px; padding: 0; border: 2px solid #eee; background: #555; }
  .stack li { height: 15px; line-height: 15px; border-bottom: 1px solid #777; padding-left: 21px; font-size: 11px; color: #ccc; }
  .stack .sel { display: flex; align-items: center; gap: 7px; padding-left: 8px; background: #444; font-size: 12px; color: #e5e5e5; }
  .stacktools { display: flex; align-items: center; height: 24px; padding: 4px 0 11px 8px; }
  .stacktools i { width: 1px; height: 16px; background: #111; }
  .stacktools .down { width: 23px; height: 23px; margin: 0 6px; border: 1px solid #161616; border-right-color: #555; border-bottom-color: #555; box-sizing: border-box; }
  .s1 { width: 27px; justify-content: flex-start; }
  .s2 { width: 35px; }
  .s3 { width: 24px; justify-content: flex-start; }
  .rollups { flex: 1; margin: 0 5px 5px -2px; border-top: 2px solid #111; padding: 7px 3px 0 1px; position: relative; border-right: 1px solid #333; }
  .rollups::before { content: ""; position: absolute; left: -1px; right: 1px; top: 6px; bottom: 0; border-top: 1px solid #1b1b1b; border-left: 1px solid #1b1b1b; border-bottom: 1px solid #555; pointer-events: none; }
  .rollup { position: relative; margin: 12px 3px 0 1px; padding: 0 4px 4px 6px; border: 1px solid #1b1b1b; }
  .head { position: relative; margin: -9px -2px 1px -3px; width: calc(100% + 5px); height: 17px; background: #4a4a4a; border: 1px solid #666; }
  .head b { position: absolute; left: 4px; }
  fieldset { margin: 0; padding: 0 0 0 4px; border: 1px solid #1b1b1b; min-width: 0; box-sizing: border-box; }
  legend { margin-left: 2px; padding: 0 1px; line-height: 16px; }
  p { margin: 0 0 0 5px; line-height: 16px; }
  .g1 { height: 96px; }
  .pickwrap { position: relative; margin: 4px 0 5px 21px; }
  .profile { width: 101px; height: 17px; background: #3d7fdc; border: 1px solid #111; color: #e8eef8; }
  .mark { position: absolute; left: -141px; top: -17px; z-index: 3; pointer-events: none; }
  fieldset > label { display: flex; align-items: center; gap: 5px; height: 18px; }
  .g1 > label { height: 19px; }
  label.off { color: #161616; }
  input[type="checkbox"], input[type="radio"] { appearance: none; width: 12px; height: 12px; border: 1px solid #666; border-top: 2px solid #151515; border-left: 2px solid #151515; background: #444; display: grid; place-items: center; }
  input[type="checkbox"]:checked::after { content: ""; width: 3px; height: 6px; border: solid #fff; border-width: 0 2px 2px 0; transform: rotate(40deg); }
  input[type="radio"] { width: 11px; height: 11px; border-radius: 50%; border: 1px solid #151515; margin-left: 1px; }
  input[type="radio"]:checked { background: #222; }
  input[type="radio"]:checked::after { content: ""; width: 5px; height: 5px; border-radius: 50%; background: #fff; }
  .pair { display: grid; grid-template-columns: 71px 71px; justify-content: space-between; margin: 6px 0 5px; }
  .pair fieldset { height: 60px; }
  .g3 { height: 61px; }
  .num { display: flex; align-items: center; justify-content: flex-end; gap: 4px; padding-right: 9px; margin-top: 3px; }
  .num input { width: 56px; height: 17px; border: 1px solid #555; border-top: 2px solid #161616; border-left: 2px solid #161616; background: #4c4c4c; color: #151515; font-size: 11px; padding: 0 1px; }

  footer { position: relative; display: flex; height: 50px; border-top: 1px solid #161616; box-sizing: border-box; background: #444; }
  .script { display: flex; flex-direction: column; gap: 1px; width: 104px; padding: 2px 4px 0 0; border-right: 1px solid #111; box-sizing: border-box; }
  .script input { height: 23px; border: 1px solid #fff; border-top: 2px solid #777; border-left: 2px solid #777; padding: 0 4px; color: #000; }
  .pink { background: #dcc2c5; }
  .listen { background: #fff; font-family: "Liberation Mono", "Noto Sans CJK SC", monospace; font-size: 12px; }
  .status { flex: 1; min-width: 0; padding: 3px 0 0 3px; display: flex; flex-direction: column; gap: 4px; }
  .row { display: flex; align-items: center; }
  .cell { display: block; box-sizing: border-box; height: 22px; line-height: 21px; border: 1px solid #161616; border-right-color: #4e4e4e; border-bottom-color: #4e4e4e; padding-left: 5px; color: #ccc; white-space: nowrap; overflow: hidden; }
  .grow { flex: 1; min-width: 0; }
  .locks { display: flex; gap: 9px; padding: 0 7px 0 4px; }
  .axis { display: flex; align-items: center; gap: 1px; color: #bbb; font-size: 11px; margin-right: 13px; }
  .axis:last-child { margin-right: 15px; }
  .axis input { width: 58px; height: 21px; border: 1px solid #555; border-top: 2px solid #111; border-left: 2px solid #111; background: #585858; }
  .iso { width: 22px; height: 22px; margin-right: 2px; background: #3d7cd6; border: 1px solid #111; }
  .grid-info { width: 100px; display: flex; flex-direction: column; gap: 4px; padding-top: 3px; }
  .bigkey { width: 42px; margin: 3px 3px 2px 3px; border: 1px solid #555; border-right-color: #111; border-bottom-color: #111; box-sizing: border-box; }
  .keys { width: 67px; display: flex; flex-direction: column; gap: 1px; padding-top: 3px; }
  .keys button { height: 22px; border: 1px solid #555; border-right-color: #111; border-bottom-color: #111; box-sizing: border-box; color: #ccc; }
  .filters { width: 112px; margin-left: 2px; padding-top: 3px; }
  .filters select { height: 20px; display: block; background: #e8e8e8; color: #000; border: 2px solid #111; padding: 0; }
  .filters .row { margin-top: 4px; gap: 4px; }
  .flt { width: 88px; height: 20px; border: 1px solid #555; border-right-color: #111; border-bottom-color: #111; color: #ccc; box-sizing: border-box; }
  .play { display: flex; align-items: flex-end; gap: 2px; padding: 0 0 3px 12px; }
  .play > .plain { height: 20px; }
  .play input { width: 64px; height: 20px; margin-left: 5px; border: 1px solid #555; border-top: 2px solid #111; border-left: 2px solid #111; background: #555; color: #ddd; font-size: 11px; padding: 0 2px; }
  .play .cfg { margin-left: 2px; }
  .nav { display: grid; grid-template-columns: repeat(3, 20px); grid-template-rows: 20px 20px; gap: 2px 4px; padding: 4px 5px 0 6px; }
  .watermark { position: absolute; right: 71px; bottom: 25px; width: 235px; height: 115px; box-sizing: border-box; padding-left: 13px; display: flex; align-items: center; gap: 16px; background: #222f55; color: #dcdfe8; z-index: 4; }
  .watermark strong { display: flex; gap: 6px; font: 700 32px/34px "Noto Sans CJK SC", sans-serif; }
  .watermark span { display: block; font: 17px/18px "DejaVu Sans", sans-serif; }
</style>
